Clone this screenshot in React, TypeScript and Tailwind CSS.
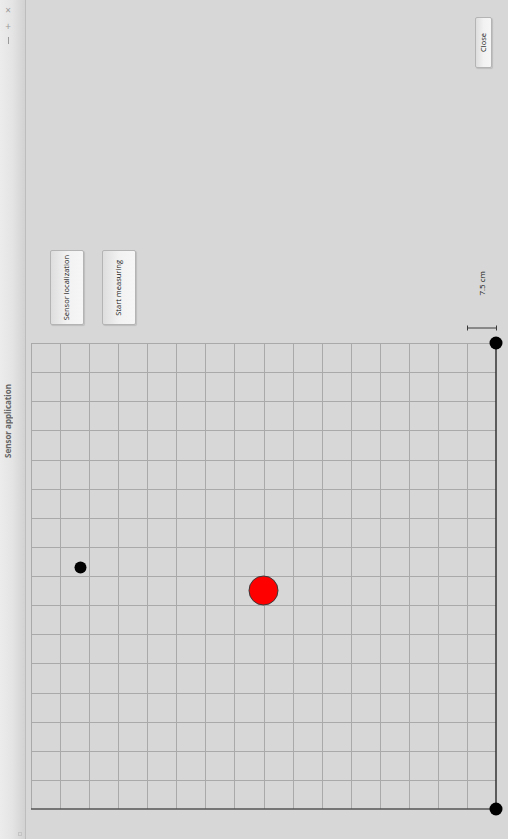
import React from 'react';

const COLS = 16;
const ROWS = 16;
const X0 = 5;
const X1 = 470;
const Y0 = 18;
const Y1 = 484;

// Plot area: grid, axes, scale bar and sensor markers
function SensorPlot() {
  const cw = (X1 - X0) / COLS;
  const rh = (Y1 - Y0) / ROWS;
  return (
    <svg width={482} height={514} className="block">
      {/* scale bar */}
      <line x1={441} y1={3} x2={470} y2={3} stroke="#3a3a3a" strokeWidth={1} />
      <line x1={441.5} y1={0.5} x2={441.5} y2={5.5} stroke="#3a3a3a" strokeWidth={1} />
      <line x1={470.5} y1={0.5} x2={470.5} y2={5.5} stroke="#3a3a3a" strokeWidth={1} />

      {Array.from({ length: COLS }).map((_, i) => {
        const x = Math.round(X0 + i * cw) + 0.5;
        return <line key={'v' + i} x1={x} y1={Y0} x2={x} y2={Y1} stroke="#a9a9a9" strokeWidth={1} />;
      })}
      {Array.from({ length: ROWS }).map((_, i) => {
        const y = Math.round(Y0 + i * rh) + 0.5;
        return <line key={'h' + i} x1={X0} y1={y} x2={X1} y2={y} stroke="#a9a9a9" strokeWidth={1} />;
      })}
      {/* axes */}
      <line x1={X0} y1={Y1} x2={X1} y2={Y1} stroke="#555" strokeWidth={1.5} />
      <line x1={X1} y1={Y0} x2={X1} y2={Y1} stroke="#333" strokeWidth={1.5} />

      <circle cx={470} cy={18} r={6.5} fill="#000" />
      <circle cx={470} cy={484} r={6.5} fill="#000" />
      <circle cx={54.5} cy={242.5} r={6} fill="#000" />
      <circle cx={237.5} cy={265.5} r={14.5} fill="#ff0000" stroke="#3a3a3a" strokeWidth={1} />
    </svg>
  );
}

function VButton({ label, className }: { label: string; className: string }) {
  return (
    <button
      className={`flex items-center justify-center rounded-[2px] border border-[#b4b4b4] bg-gradient-to-r from-[#dedede] via-[#f2f2f2] to-[#f6f6f6] shadow-[1px_1px_1px_rgba(0,0,0,0.12)] ${className}`}
    >
      <span className="rotate-180 text-[7.5px] leading-none text-[#111] [writing-mode:vertical-rl]">{label}</span>
    </button>
  );
}

export default function App() {
  return (
    <div className="flex h-[839px] w-[508px] overflow-hidden bg-[#d7d7d7] font-['Open_Sans',sans-serif]">
      {/* rotated title bar */}
      <div className="relative flex w-[26px] shrink-0 flex-col items-center border-r border-[#bdbdbd] bg-gradient-to-r from-[#ececec] via-[#e4e4e4] to-[#d2d2d2]">
        <div className="mt-[5px] flex w-full flex-col items-center gap-[6px] pr-[9px] text-[#9a9a9a]">
          <span className="text-[10px] leading-[10px]">×</span>
          <span className="text-[10px] leading-[10px]">+</span>
          <span className="h-[7px] w-px bg-[#9a9a9a]" />
        </div>
        <div className="flex flex-1 items-center pb-[34px] pr-[9px]">
          <span className="rotate-180 text-[8px] font-bold leading-none text-[#666] [writing-mode:vertical-rl]">
            Sensor application
          </span>
        </div>
        <div className="mb-[3px] ml-[14px] h-[4px] w-[4px] border border-[#c4c4c4]" />
      </div>

      {/* main area */}
      <div className="flex flex-1 flex-col">
        <div className="flex h-[250px] items-start justify-end pr-[16px] pt-[17px]">
          <VButton label="Close" className="h-[51px] w-[17px]" />
        </div>
        <div className="flex h-[75px] pl-[24px]">
          <VButton label="Sensor localization" className="h-[75px] w-[34px]" />
          <VButton label="Start measuring" className="ml-[18px] h-[75px] w-[34px]" />
          <div className="flex flex-1 justify-end pr-[22px] pt-[21px]">
            <span className="h-fit rotate-180 text-[8px] leading-none text-[#111] [writing-mode:vertical-rl]">7.5 cm</span>
          </div>
        </div>
        <SensorPlot />
      </div>
    </div>
  );
}
